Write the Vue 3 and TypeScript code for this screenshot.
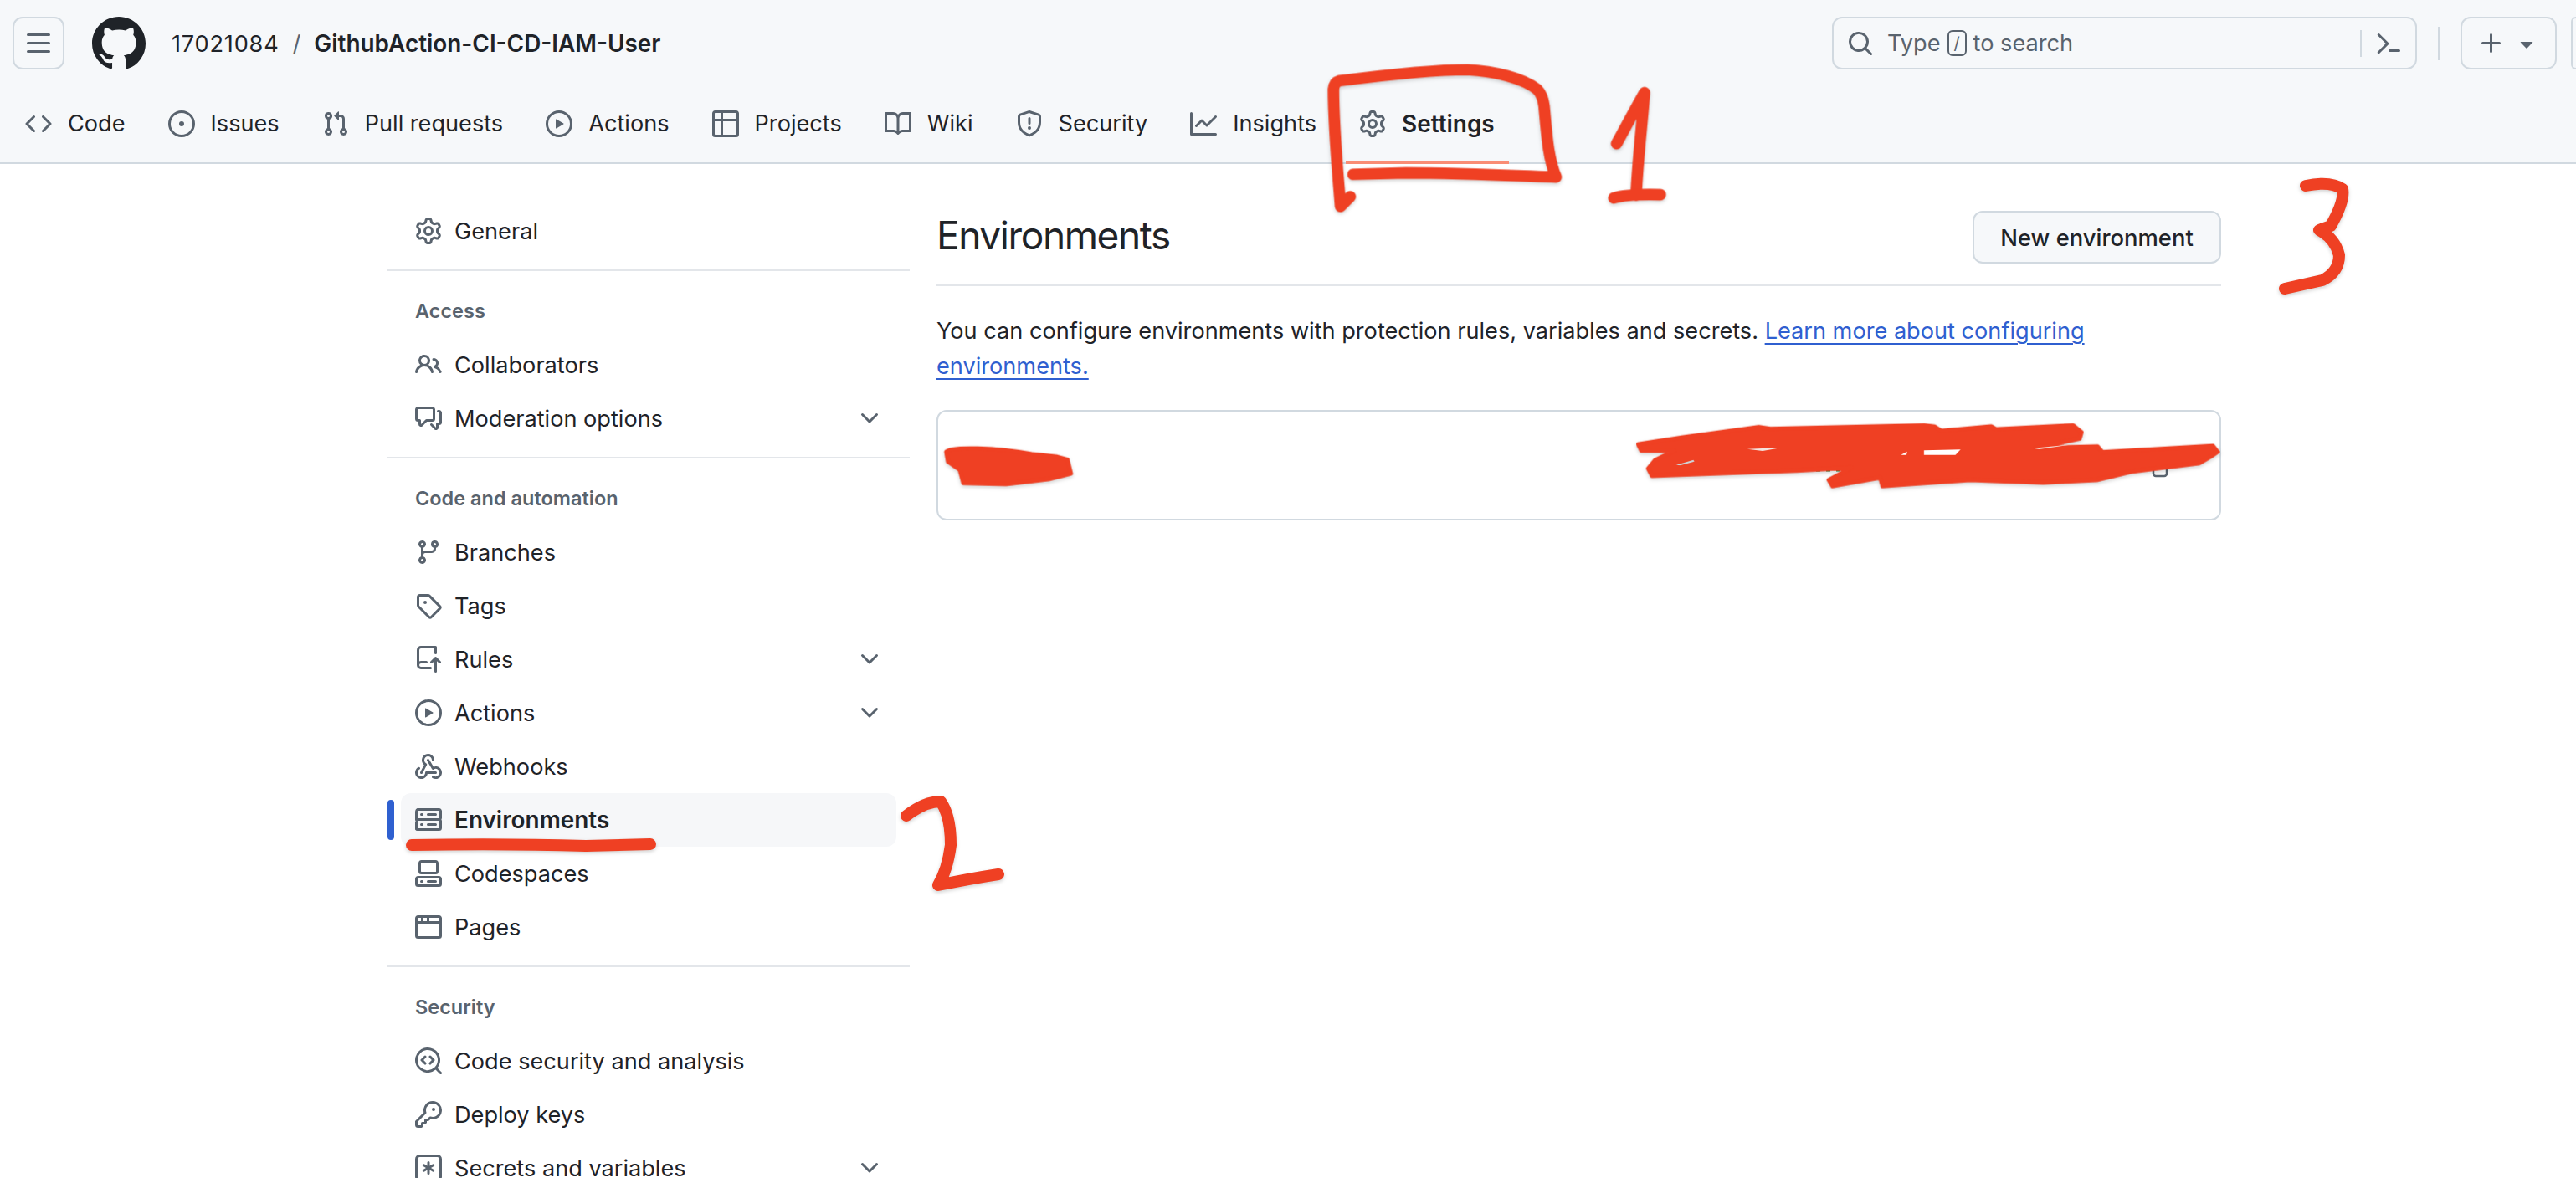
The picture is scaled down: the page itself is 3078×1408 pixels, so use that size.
<script setup lang="ts">
const P: Record<string, string> = {
  bars: 'M1 2.75A.75.75 0 0 1 1.75 2h12.5a.75.75 0 0 1 0 1.5H1.75A.75.75 0 0 1 1 2.75Zm0 5A.75.75 0 0 1 1.75 7h12.5a.75.75 0 0 1 0 1.5H1.75A.75.75 0 0 1 1 7.75ZM1.75 12h12.5a.75.75 0 0 1 0 1.5H1.75a.75.75 0 0 1 0-1.5Z',
  mark: 'M8 0c4.42 0 8 3.58 8 8a8.013 8.013 0 0 1-5.45 7.59c-.4.08-.55-.17-.55-.38 0-.27.01-1.13.01-2.2 0-.75-.25-1.23-.54-1.48 1.78-.2 3.65-.88 3.65-3.95 0-.88-.31-1.59-.82-2.15.08-.2.36-1.02-.08-2.12 0 0-.67-.22-2.2.82-.64-.18-1.32-.27-2-.27-.68 0-1.36.09-2 .27-1.53-1.03-2.2-.82-2.2-.82-.44 1.1-.16 1.92-.08 2.12-.51.56-.82 1.28-.82 2.15 0 3.06 1.86 3.75 3.64 3.95-.23.2-.44.55-.51 1.07-.46.21-1.61.55-2.33-.66-.15-.24-.6-.83-1.23-.82-.67.01-.27.38.01.53.34.19.73.9.82 1.13.16.45.68 1.31 2.69.94 0 .67.01 1.3.01 1.49 0 .21-.15.45-.55.38A7.995 7.995 0 0 1 0 8c0-4.42 3.58-8 8-8Z',
  code: 'm11.28 3.22 4.25 4.25a.75.75 0 0 1 0 1.06l-4.25 4.25a.749.749 0 0 1-1.275-.326.749.749 0 0 1 .215-.734L13.94 8l-3.72-3.72a.749.749 0 0 1 .326-1.275.749.749 0 0 1 .734.215Zm-6.56 0a.751.751 0 0 1 1.042.018.751.751 0 0 1 .018 1.042L2.06 8l3.72 3.72a.749.749 0 0 1-.326 1.275.749.749 0 0 1-.734-.215L.47 8.53a.75.75 0 0 1 0-1.06Z',
  issue: 'M8 9.5a1.5 1.5 0 1 0 0-3 1.5 1.5 0 0 0 0 3Z M8 0a8 8 0 1 1 0 16A8 8 0 0 1 8 0ZM1.5 8a6.5 6.5 0 1 0 13 0 6.5 6.5 0 0 0-13 0Z',
  pull: 'M1.5 3.25a2.25 2.25 0 1 1 3 2.122v5.256a2.251 2.251 0 1 1-1.5 0V5.372A2.25 2.25 0 0 1 1.5 3.25Zm5.677-.177L9.573.677A.25.25 0 0 1 10 .854V2.5h1A2.5 2.5 0 0 1 13.5 5v5.628a2.251 2.251 0 1 1-1.5 0V5a1 1 0 0 0-1-1h-1v1.646a.25.25 0 0 1-.427.177L7.177 3.427a.25.25 0 0 1 0-.354ZM3.75 2.5a.75.75 0 1 0 0 1.5.75.75 0 0 0 0-1.5Zm0 9.5a.75.75 0 1 0 0 1.5.75.75 0 0 0 0-1.5Zm8.25.75a.75.75 0 1 0 1.5 0 .75.75 0 0 0-1.5 0Z',
  play: 'M8 0a8 8 0 1 1 0 16A8 8 0 0 1 8 0ZM1.5 8a6.5 6.5 0 1 0 13 0 6.5 6.5 0 0 0-13 0Zm4.879-2.773 4.264 2.559a.25.25 0 0 1 0 .428l-4.264 2.559A.25.25 0 0 1 6 10.559V5.442a.25.25 0 0 1 .379-.215Z',
  table: 'M0 1.75C0 .784.784 0 1.75 0h12.5C15.216 0 16 .784 16 1.75v12.5A1.75 1.75 0 0 1 14.25 16H1.75A1.75 1.75 0 0 1 0 14.25ZM6.5 6.5v8h7.75a.25.25 0 0 0 .25-.25V6.5Zm8-1.5V1.75a.25.25 0 0 0-.25-.25H6.5V5Zm-13 1.5v7.75c0 .138.112.25.25.25H5v-8ZM5 5V1.5H1.75a.25.25 0 0 0-.25.25V5Z',
  book: 'M0 1.75A.75.75 0 0 1 .75 1h4.253c1.227 0 2.317.59 3 1.501A3.743 3.743 0 0 1 11.006 1h4.245a.75.75 0 0 1 .75.75v10.5a.75.75 0 0 1-.75.75h-4.507a2.25 2.25 0 0 0-1.591.659l-.622.621a.75.75 0 0 1-1.06 0l-.622-.621A2.25 2.25 0 0 0 5.258 13H.75a.75.75 0 0 1-.75-.75Zm7.251 10.324.004-5.073-.002-2.253A2.25 2.25 0 0 0 5.003 2.5H1.5v9h3.757a3.75 3.75 0 0 1 1.994.574ZM8.755 4.75l-.004 7.322a3.752 3.752 0 0 1 1.992-.572H14.5v-9h-3.495a2.25 2.25 0 0 0-2.25 2.25Z',
  shield: 'M7.467.133a1.748 1.748 0 0 1 1.066 0l5.25 1.68A1.75 1.75 0 0 1 15 3.48V7c0 1.566-.32 3.182-1.303 4.682-.983 1.498-2.585 2.813-5.032 3.855a1.697 1.697 0 0 1-1.33 0c-2.447-1.042-4.049-2.357-5.032-3.855C1.32 10.182 1 8.566 1 7V3.48a1.75 1.75 0 0 1 1.217-1.667Zm.61 1.429a.25.25 0 0 0-.153 0l-5.25 1.68a.25.25 0 0 0-.174.238V7c0 1.358.275 2.666 1.057 3.86.784 1.194 2.121 2.34 4.366 3.297a.196.196 0 0 0 .154 0c2.245-.956 3.582-2.104 4.366-3.298C13.225 9.666 13.5 8.36 13.5 7V3.48a.251.251 0 0 0-.174-.237l-5.25-1.68ZM8.75 4.75v3a.75.75 0 0 1-1.5 0v-3a.75.75 0 0 1 1.5 0ZM9 10.5a1 1 0 1 1-2 0 1 1 0 0 1 2 0Z',
  graph: 'M1.5 1.75V13.5h13.75a.75.75 0 0 1 0 1.5H.75a.75.75 0 0 1-.75-.75V1.75a.75.75 0 0 1 1.5 0Zm14.28 2.53-5.25 5.25a.75.75 0 0 1-1.06 0L7 7.06 4.28 9.78a.751.751 0 0 1-1.042-.018.751.751 0 0 1-.018-1.042l3.25-3.25a.75.75 0 0 1 1.06 0L10 7.94l4.72-4.72a.751.751 0 0 1 1.042.018.751.751 0 0 1 .018 1.042Z',
  gear: 'M8 0a8.2 8.2 0 0 1 .701.031C9.444.095 9.99.645 10.16 1.29l.288 1.107c.018.066.079.158.212.224.231.114.454.243.668.386.123.082.233.09.299.071l1.103-.303c.644-.176 1.392.021 1.82.63.27.385.506.792.704 1.218.315.675.111 1.422-.364 1.891l-.814.806c-.049.048-.098.147-.088.294.016.257.016.515 0 .772-.01.147.038.246.088.294l.814.806c.475.469.679 1.216.364 1.891a7.977 7.977 0 0 1-.704 1.217c-.428.61-1.176.807-1.82.63l-1.102-.302c-.067-.019-.177-.011-.3.071a5.909 5.909 0 0 1-.668.386c-.133.066-.194.158-.211.224l-.29 1.106c-.168.646-.715 1.196-1.458 1.26a8.006 8.006 0 0 1-1.402 0c-.743-.064-1.289-.614-1.458-1.26l-.289-1.106c-.018-.066-.079-.158-.212-.224a5.738 5.738 0 0 1-.668-.386c-.123-.082-.233-.09-.299-.071l-1.103.303c-.644.176-1.392-.021-1.82-.63a8.12 8.12 0 0 1-.704-1.218c-.315-.675-.111-1.422.363-1.891l.815-.806c.05-.048.098-.147.088-.294a6.214 6.214 0 0 1 0-.772c.01-.147-.038-.246-.088-.294l-.815-.806C.635 6.045.431 5.298.746 4.623a7.92 7.92 0 0 1 .704-1.217c.428-.61 1.176-.807 1.82-.63l1.102.302c.067.019.177.011.3-.071.214-.143.437-.272.668-.386.133-.066.194-.158.211-.224l.29-1.106C6.009.645 6.556.095 7.299.03 7.53.01 7.764 0 8 0Zm-.571 1.525c-.036.003-.108.036-.137.146l-.289 1.105c-.147.561-.549.967-.998 1.189-.173.086-.34.183-.5.29-.417.278-.97.423-1.529.27l-1.103-.303c-.109-.03-.175.016-.195.045-.22.312-.412.644-.573.99-.014.031-.021.11.059.19l.815.806c.411.406.562.957.53 1.456a4.709 4.709 0 0 0 0 .582c.032.499-.119 1.05-.53 1.456l-.815.806c-.081.08-.073.159-.059.19.162.346.353.677.573.989.02.03.085.076.195.046l1.102-.303c.56-.153 1.113-.008 1.53.27.161.107.328.204.501.29.447.222.85.629.997 1.189l.289 1.105c.029.109.101.143.137.146a6.6 6.6 0 0 0 1.142 0c.036-.003.108-.036.137-.146l.289-1.105c.147-.561.549-.967.998-1.189.173-.086.34-.183.5-.29.417-.278.97-.423 1.529-.27l1.103.303c.109.029.175-.016.195-.045.22-.313.411-.644.573-.99.014-.031.021-.11-.059-.19l-.815-.806c-.411-.406-.562-.957-.53-1.456a4.709 4.709 0 0 0 0-.582c-.032-.499.119-1.05.53-1.456l.815-.806c.081-.08.073-.159.059-.19a6.464 6.464 0 0 0-.573-.989c-.02-.03-.085-.076-.195-.046l-1.102.303c-.56.153-1.113.008-1.53-.27a4.44 4.44 0 0 0-.501-.29c-.447-.222-.85-.629-.997-1.189l-.289-1.105c-.029-.11-.101-.143-.137-.146a6.6 6.6 0 0 0-1.142 0ZM11 8a3 3 0 1 1-6 0 3 3 0 0 1 6 0ZM9.5 8a1.5 1.5 0 1 0-3.001.001A1.5 1.5 0 0 0 9.5 8Z',
  search: 'M10.68 11.74a6 6 0 0 1-7.922-8.982 6 6 0 0 1 8.982 7.922l3.04 3.04a.749.749 0 0 1-.326 1.275.749.749 0 0 1-.734-.215ZM11.5 7a4.499 4.499 0 1 0-8.997 0A4.499 4.499 0 0 0 11.5 7Z',
  palette: 'm6.354 8.04-4.773 4.773a.75.75 0 1 0 1.061 1.06L7.945 8.57a.75.75 0 0 0 0-1.06L2.642 2.206a.75.75 0 0 0-1.06 1.061L6.353 8.04ZM8.75 11.5a.75.75 0 0 0 0 1.5h5.5a.75.75 0 0 0 0-1.5h-5.5Z',
  plus: 'M7.75 2a.75.75 0 0 1 .75.75V7h4.25a.75.75 0 0 1 0 1.5H8.5v4.25a.75.75 0 0 1-1.5 0V8.5H2.75a.75.75 0 0 1 0-1.5H7V2.75A.75.75 0 0 1 7.75 2Z',
  tri: 'm4.427 7.427 3.396 3.396a.25.25 0 0 0 .354 0l3.396-3.396A.25.25 0 0 0 11.396 7H4.604a.25.25 0 0 0-.177.427Z',
  chev: 'M12.78 5.22a.749.749 0 0 1 0 1.06l-4.25 4.25a.749.749 0 0 1-1.06 0L3.22 6.28a.749.749 0 1 1 1.06-1.06L8 8.939l3.72-3.719a.749.749 0 0 1 1.06 0Z',
  people: 'M2 5.5a3.5 3.5 0 1 1 5.898 2.549 5.508 5.508 0 0 1 3.034 4.084.75.75 0 1 1-1.482.235 4 4 0 0 0-7.9 0 .75.75 0 0 1-1.482-.236A5.507 5.507 0 0 1 3.102 8.05 3.493 3.493 0 0 1 2 5.5ZM11 4a3.001 3.001 0 0 1 2.22 5.018 5.01 5.01 0 0 1 2.56 3.012.749.749 0 0 1-.885.954.752.752 0 0 1-.549-.514 3.507 3.507 0 0 0-2.522-2.372.75.75 0 0 1-.574-.73v-.352a.75.75 0 0 1 .416-.672A1.5 1.5 0 0 0 11 5.5.75.75 0 0 1 11 4Zm-5.5-.5a2 2 0 1 0-.001 3.999A2 2 0 0 0 5.5 3.5Z',
  discussion: 'M1.75 1h8.5c.966 0 1.75.784 1.75 1.75v5.5A1.75 1.75 0 0 1 10.25 10H7.061l-2.574 2.573A1.458 1.458 0 0 1 2 11.543V10h-.25A1.75 1.75 0 0 1 0 8.25v-5.5C0 1.784.784 1 1.75 1ZM1.5 2.75v5.5c0 .138.112.25.25.25h1a.75.75 0 0 1 .75.75v2.19l2.72-2.72a.749.749 0 0 1 .53-.22h3.5a.25.25 0 0 0 .25-.25v-5.5a.25.25 0 0 0-.25-.25h-8.5a.25.25 0 0 0-.25.25Zm13 2a.25.25 0 0 0-.25-.25h-.5a.75.75 0 0 1 0-1.5h.5c.966 0 1.75.784 1.75 1.75v5.5A1.75 1.75 0 0 1 14.25 12H14v1.543a1.458 1.458 0 0 1-2.487 1.03L9.22 12.28a.749.749 0 0 1 .326-1.275.749.749 0 0 1 .734.215l2.22 2.22v-2.19a.75.75 0 0 1 .75-.75h1a.25.25 0 0 0 .25-.25Z',
  branch: 'M9.5 3.25a2.25 2.25 0 1 1 3 2.122V6A2.5 2.5 0 0 1 10 8.5H6a1 1 0 0 0-1 1v1.128a2.251 2.251 0 1 1-1.5 0V5.372a2.25 2.25 0 1 1 1.5 0v1.836A2.493 2.493 0 0 1 6 7h4a1 1 0 0 0 1-1v-.628A2.25 2.25 0 0 1 9.5 3.25Zm-6 0a.75.75 0 1 0 1.5 0 .75.75 0 0 0-1.5 0Zm8.25-.75a.75.75 0 1 0 0 1.5.75.75 0 0 0 0-1.5ZM4.25 12a.75.75 0 1 0 0 1.5.75.75 0 0 0 0-1.5Z',
  tag: 'M1 7.775V2.75C1 1.784 1.784 1 2.75 1h5.025c.464 0 .91.184 1.238.513l6.25 6.25a1.75 1.75 0 0 1 0 2.474l-5.026 5.026a1.75 1.75 0 0 1-2.474 0l-6.25-6.25A1.75 1.75 0 0 1 1 7.775Zm1.5 0c0 .066.026.13.073.177l6.25 6.25a.25.25 0 0 0 .354 0l5.025-5.025a.25.25 0 0 0 0-.354l-6.25-6.25a.25.25 0 0 0-.177-.073H2.75a.25.25 0 0 0-.25.25ZM6 5a1 1 0 1 1 0 2 1 1 0 0 1 0-2Z',
  push: 'M1 2.5A2.5 2.5 0 0 1 3.5 0h8.75a.75.75 0 0 1 .75.75v3.5a.75.75 0 0 1-1.5 0V1.5h-8a1 1 0 0 0-1 1v6.708A2.492 2.492 0 0 1 3.5 9h3.25a.75.75 0 0 1 0 1.5H3.5a1 1 0 0 0 0 2h5.75a.75.75 0 0 1 0 1.5H3.5A2.5 2.5 0 0 1 1 11.5Zm13.23 7.79h-.001l-1.224-1.224v6.184a.75.75 0 0 1-1.5 0V9.066L10.28 10.29a.75.75 0 0 1-1.06-1.061l2.505-2.504a.75.75 0 0 1 1.06 0L15.29 9.23a.751.751 0 0 1-.018 1.042.751.751 0 0 1-1.042.018Z',
  webhook: 'M5.5 4.25a2.25 2.25 0 0 1 4.5 0 .75.75 0 0 0 1.5 0 3.75 3.75 0 1 0-6.14 2.889l-2.272 4.258a.75.75 0 0 0 1.324.706L7 7.25a.75.75 0 0 0-.309-1.015A2.25 2.25 0 0 1 5.5 4.25Z M7.364 3.607a.75.75 0 0 1 1.03.257l2.608 4.349a3.75 3.75 0 1 1-.628 6.785.75.75 0 0 1 .752-1.299 2.25 2.25 0 1 0-.033-3.88.75.75 0 0 1-1.03-.256L7.107 4.636a.75.75 0 0 1 .257-1.03Z M2.9 8.776A.75.75 0 0 1 2.625 9.8 2.25 2.25 0 1 0 6 11.75a.75.75 0 0 1 .75-.751h5.5a.75.75 0 0 1 0 1.5H7.425a3.751 3.751 0 1 1-5.55-3.998.75.75 0 0 1 1.024.274Z',
  server: 'M1.75 1h12.5c.966 0 1.75.784 1.75 1.75v4c0 .372-.116.717-.314 1 .198.283.314.628.314 1v4a1.75 1.75 0 0 1-1.75 1.75H1.75A1.75 1.75 0 0 1 0 13.75v-4c0-.372.116-.717.314-1a1.739 1.739 0 0 1-.314-1v-4C0 1.784.784 1 1.75 1ZM1.5 2.75v4c0 .138.112.25.25.25h12.5a.25.25 0 0 0 .25-.25v-4a.25.25 0 0 0-.25-.25H1.75a.25.25 0 0 0-.25.25Zm.25 5.75a.25.25 0 0 0-.25.25v4c0 .138.112.25.25.25h12.5a.25.25 0 0 0 .25-.25v-4a.25.25 0 0 0-.25-.25ZM7 4.75A.75.75 0 0 1 7.75 4h4.5a.75.75 0 0 1 0 1.5h-4.5A.75.75 0 0 1 7 4.75ZM7.75 10h4.5a.75.75 0 0 1 0 1.5h-4.5a.75.75 0 0 1 0-1.5ZM3 4.75A.75.75 0 0 1 3.75 4h.5a.75.75 0 0 1 0 1.5h-.5A.75.75 0 0 1 3 4.75ZM3.75 10h.5a.75.75 0 0 1 0 1.5h-.5a.75.75 0 0 1 0-1.5Z',
  codespaces: 'M0 11.25c0-.966.784-1.75 1.75-1.75h12.5c.966 0 1.75.784 1.75 1.75v3A1.75 1.75 0 0 1 14.25 16H1.75A1.75 1.75 0 0 1 0 14.25Zm2-9.5C2 .784 2.784 0 3.75 0h8.5C13.216 0 14 .784 14 1.75v5a1.75 1.75 0 0 1-1.75 1.75h-8.5A1.75 1.75 0 0 1 2 6.75Zm1.75-.25a.25.25 0 0 0-.25.25v5c0 .138.112.25.25.25h8.5a.25.25 0 0 0 .25-.25v-5a.25.25 0 0 0-.25-.25Zm-2 9.5a.25.25 0 0 0-.25.25v3c0 .138.112.25.25.25h12.5a.25.25 0 0 0 .25-.25v-3a.25.25 0 0 0-.25-.25Z M7 12.75a.75.75 0 0 1 .75-.75h4.5a.75.75 0 0 1 0 1.5h-4.5a.75.75 0 0 1-.75-.75Zm-4 0a.75.75 0 0 1 .75-.75h.5a.75.75 0 0 1 0 1.5h-.5a.75.75 0 0 1-.75-.75Z',
  browser: 'M0 2.75C0 1.784.784 1 1.75 1h12.5c.966 0 1.75.784 1.75 1.75v10.5A1.75 1.75 0 0 1 14.25 15H1.75A1.75 1.75 0 0 1 0 13.25ZM14.5 6h-13v7.25c0 .138.112.25.25.25h12.5a.25.25 0 0 0 .25-.25Zm-6-3.5v2H14.5V2.75a.25.25 0 0 0-.25-.25ZM5 2.5v2h2v-2Zm-3.25 0a.25.25 0 0 0-.25.25V4.5h2v-2Z',
  codescan: 'M8.47 4.97a.75.75 0 0 0 0 1.06L9.94 7.5 8.47 8.97a.75.75 0 1 0 1.06 1.06l2-2a.75.75 0 0 0 0-1.06l-2-2a.75.75 0 0 0-1.06 0ZM6.53 6.03a.75.75 0 0 0-1.06-1.06l-2 2a.75.75 0 0 0 0 1.06l2 2a.75.75 0 1 0 1.06-1.06L5.06 7.5l1.47-1.47Z M12.246 13.307a7.501 7.501 0 1 1 1.06-1.06l2.474 2.473a.749.749 0 0 1-.326 1.275.749.749 0 0 1-.734-.215ZM1.5 7.5a6.002 6.002 0 0 0 3.608 5.504 6.002 6.002 0 0 0 6.486-1.117.748.748 0 0 1 .292-.293A6 6 0 1 0 1.5 7.5Z',
  key: 'M10.5 0a5.499 5.499 0 1 1-1.288 10.848l-.932.932a.749.749 0 0 1-.53.22H7v.75a.749.749 0 0 1-.22.53l-.5.5a.749.749 0 0 1-.53.22H5v.75a.749.749 0 0 1-.22.53l-.5.5a.749.749 0 0 1-.53.22h-2A1.75 1.75 0 0 1 0 14.25v-2c0-.199.079-.389.22-.53l4.932-4.932A5.5 5.5 0 0 1 10.5 0Zm-4 5.5c-.001.431.069.86.205 1.269a.75.75 0 0 1-.181.768L1.5 12.56v1.69c0 .138.112.25.25.25h1.69l.06-.06v-1.19a.75.75 0 0 1 .75-.75h1.19l.06-.06v-1.19a.75.75 0 0 1 .75-.75h1.19l1.023-1.025a.75.75 0 0 1 .768-.18A4 4 0 1 0 6.5 5.5ZM11 6a1 1 0 1 1 0-2 1 1 0 0 1 0 2Z',
  asterisk: 'M0 2.75A2.75 2.75 0 0 1 2.75 0h10.5A2.75 2.75 0 0 1 16 2.75v10.5A2.75 2.75 0 0 1 13.25 16H2.75A2.75 2.75 0 0 1 0 13.25ZM2.75 1.5c-.69 0-1.25.56-1.25 1.25v10.5c0 .69.56 1.25 1.25 1.25h10.5c.69 0 1.25-.56 1.25-1.25V2.75c0-.69-.56-1.25-1.25-1.25Z M8 4a.75.75 0 0 1 .75.75V6.7l1.69-.975a.75.75 0 0 1 .75 1.3L9.5 8l1.69.976a.75.75 0 0 1-.75 1.298L8.75 9.3v1.951a.75.75 0 0 1-1.5 0V9.299l-1.69.976a.75.75 0 0 1-.75-1.3L6.5 8l-1.69-.975a.75.75 0 0 1 .75-1.3l1.69.976V4.75A.75.75 0 0 1 8 4Z',
}

const tabs = [
  { label: 'Code', icon: 'code' },
  { label: 'Issues', icon: 'issue' },
  { label: 'Pull requests', icon: 'pull' },
  { label: 'Actions', icon: 'play' },
  { label: 'Projects', icon: 'table' },
  { label: 'Wiki', icon: 'book' },
  { label: 'Security', icon: 'shield' },
  { label: 'Insights', icon: 'graph' },
  { label: 'Settings', icon: 'gear', active: true },
]

interface Item { label: string; icon: string; chev?: boolean; active?: boolean }
interface Group { title?: string; items: Item[] }
const groups: Group[] = [
  { items: [{ label: 'General', icon: 'gear' }] },
  { title: 'Access', items: [
    { label: 'Collaborators', icon: 'people' },
    { label: 'Moderation options', icon: 'discussion', chev: true },
  ] },
  { title: 'Code and automation', items: [
    { label: 'Branches', icon: 'branch' },
    { label: 'Tags', icon: 'tag' },
    { label: 'Rules', icon: 'push', chev: true },
    { label: 'Actions', icon: 'play', chev: true },
    { label: 'Webhooks', icon: 'webhook' },
    { label: 'Environments', icon: 'server', active: true },
    { label: 'Codespaces', icon: 'codespaces' },
    { label: 'Pages', icon: 'browser' },
  ] },
  { title: 'Security', items: [
    { label: 'Code security and analysis', icon: 'codescan' },
    { label: 'Deploy keys', icon: 'key' },
    { label: 'Secrets and variables', icon: 'asterisk', chev: true },
  ] },
]
</script>

<template>
  <div class="page">
    <header class="header">
      <div class="top">
        <button class="btn-icon burger"><svg class="ic" viewBox="0 0 16 16"><path :d="P.bars" /></svg></button>
        <svg class="logo" viewBox="0 0 16 16"><path :d="P.mark" /></svg>
        <div class="crumb">
          <span class="owner">17021084</span>
          <span class="slash">/</span>
          <strong>GithubAction-CI-CD-IAM-User</strong>
        </div>
        <div class="spacer"></div>
        <div class="search">
          <svg class="ic" viewBox="0 0 16 16"><path :d="P.search" /></svg>
          <span class="placeholder">Type <kbd class="kbd">/</kbd> to search</span>
          <span class="search-sep"></span>
          <svg class="ic" viewBox="0 0 16 16"><path :d="P.palette" /></svg>
        </div>
        <span class="top-sep"></span>
        <button class="btn-icon plus">
          <svg class="ic" viewBox="0 0 16 16"><path :d="P.plus" /></svg>
          <svg class="ic" viewBox="0 0 16 16"><path :d="P.tri" /></svg>
        </button>
        <button class="btn-icon stub"></button>
      </div>
      <nav class="tabs">
        <a v-for="t in tabs" :key="t.label" class="tab" :class="{ active: t.active }">
          <svg class="ic" viewBox="0 0 16 16"><path :d="P[t.icon]" /></svg>
          <span>{{ t.label }}</span>
        </a>
      </nav>
    </header>

    <main class="main">
      <aside class="side">
        <section v-for="(g, i) in groups" :key="i" class="group">
          <h3 v-if="g.title" class="group-title">{{ g.title }}</h3>
          <a v-for="it in g.items" :key="it.label" class="item" :class="{ active: it.active }">
            <svg class="ic" viewBox="0 0 16 16"><path :d="P[it.icon]" /></svg>
            <span class="item-label">{{ it.label }}</span>
            <svg v-if="it.chev" class="ic chev" viewBox="0 0 16 16"><path :d="P.chev" /></svg>
          </a>
        </section>
      </aside>

      <section class="content">
        <div class="head">
          <h2 class="title">Environments</h2>
          <button class="new">New environment</button>
        </div>
        <p class="desc">You can configure environments with protection rules, variables and secrets. <a class="link">Learn more about configuring environments.</a></p>
        <div class="box"></div>
      </section>
    </main>

    <svg class="marks" viewBox="0 0 3078 1408">
      <rect x="2573" y="552" width="16" height="17" rx="3" fill="none" stroke="#59636e" stroke-width="2.5" />
      <line x1="2170" y1="561" x2="2208" y2="561" stroke="#2f7d32" stroke-width="5" stroke-dasharray="5 7" />
      <g fill="none" stroke="#ef4023" stroke-linecap="round" stroke-linejoin="round">
        <g transform="translate(1580 70) scale(.3333)" stroke-width="41">
          <path d="M100 495 L65 530 C55 400 40 250 40 110 Q42 85 60 80 C200 62 400 40 520 40 C620 45 720 70 770 110 Q790 130 795 170 C805 280 810 360 838 425 C700 420 500 410 300 410 L110 415" />
          <path d="M1055 305 C1090 240 1125 175 1155 122 C1145 250 1130 370 1125 490" />
          <path d="M1045 500 Q1090 485 1212 488" />
        </g>
        <g stroke-width="14">
          <path d="M2755 222 Q2785 216 2799 226 Q2802 240 2785 270 L2771 275 Q2790 285 2795 305 Q2795 325 2775 335 L2730 345" />
          <path d="M1083 975 Q1105 958 1124 958 Q1136 975 1136 1010 Q1132 1040 1121 1058 Q1160 1050 1193 1045" />
          <path d="M492 1010 Q600 1008 700 1011 L777 1009" />
        </g>
      </g>
      <g class="blobs" fill="#ef4023" stroke="#ef4023" stroke-linejoin="round">
        <g transform="translate(1100 360) scale(1.0204 .3333)">
          <path vector-effect="non-scaling-stroke" stroke-width="5" d="M30 540 C35 520 90 525 130 548 L160 558 L172 568 L176 618 L150 638 L100 656 L50 652 L46 605 L32 575 Z" />
        </g>
        <g transform="translate(1950 495) scale(.4591 .3333)">
          <path vector-effect="non-scaling-stroke" stroke-width="5" d="M16 108 L130 84 L330 46 L360 52 L760 40 L788 45 L805 60 L935 44 L948 54 L1148 40 L1170 65 L1165 88 L1050 122 L1212 116 L1224 136 L1512 114 L1524 135 L1505 153 L1476 176 L1300 206 L1210 236 L1070 246 L880 236 L652 258 L646 228 L522 258 L512 236 L572 192 L430 202 L52 221 L42 195 L60 165 L110 132 L24 131 Z" />
        </g>
      </g>
      <g fill="#fff" transform="translate(1950 495) scale(.4591 .3333)">
        <path fill="#cfd3d6" d="M115 182 L160 164 L162 170 L125 184 Z" />
        <path fill="#f4e4e0" d="M300 125 L390 120 L340 132 Z" />
        <path d="M700 146 L716 134 L714 146 Z" />
        <path d="M760 130 L855 127 L842 146 L760 146 Z" />
        <path fill="#f5d6cf" d="M1045 122 L1150 108 L1060 126 Z" />
      </g>
    </svg>
  </div>
</template>

<style>
html, body { margin: 0; background: #fff; }
</style>

<style scoped>
.page {
  position: relative;
  width: 3078px;
  height: 1408px;
  overflow: hidden;
  background: #fff;
  color: #1f2328;
  font-family: Inter, "Liberation Sans", sans-serif;
  font-size: 27.15px;
}
.ic { width: 32px; height: 32px; fill: #59636e; flex: none; display: block; }
.header {
  height: 194px;
  background: #f6f8fa;
  border-bottom: 2px solid #d1d9e0;
  display: flex;
  flex-direction: column;
}
.top {
  display: flex;
  align-items: center;
  padding: 20px 0 0 15px;
  height: 63px;
}
.btn-icon {
  height: 63px;
  box-sizing: border-box;
  background: #f6f8fa;
  border: 2px solid #d1d9e0;
  border-radius: 12px;
  padding: 0;
  display: flex;
  align-items: center;
  justify-content: center;
}
.burger { width: 62px; }
.logo { width: 64px; height: 64px; fill: #1f2328; margin-left: 33px; flex: none; }
.crumb { margin-left: 31px; display: flex; align-items: center; gap: 16px; padding-top: 1px; }
.owner { letter-spacing: .8px; }
.crumb strong { font-weight: 600; font-size: 27.9px; }
.slash { color: #59636e; }
.spacer { flex: 1; }
.search {
  width: 699px;
  height: 63px;
  box-sizing: border-box;
  border: 2px solid #d1d9e0;
  border-radius: 12px;
  display: flex;
  align-items: center;
  padding: 0 16px;
  color: #59636e;
}
.placeholder { margin-left: 16px; flex: 1; display: flex; align-items: center; gap: 8px; }
.kbd {
  width: 23px;
  height: 31px;
  box-sizing: border-box;
  border: 2px solid #59636e;
  border-radius: 6px;
  font: inherit;
  font-size: 20px;
  display: inline-flex;
  align-items: center;
  justify-content: center;
}
.search-sep { width: 2px; height: 32px; background: #d1d9e0; margin-right: 16px; }
.top-sep { width: 2px; height: 40px; background: #d1d9e0; margin: 0 25px; }
.plus { width: 115px; gap: 10px; }
.stub { width: 6px; margin-left: 17px; border-right: 0; border-radius: 12px 0 0 12px; }
.tabs {
  flex: 1;
  display: flex;
  align-items: stretch;
  gap: 51px;
  margin-top: 17px;
  padding: 1px 0 0 30px;
}
.tab { position: relative; display: flex; align-items: center; gap: 19px; }
.tab.active { font-weight: 600; font-size: 27.9px; }
.tab.active::after {
  content: "";
  position: absolute;
  left: -16px;
  right: -17px;
  bottom: -2px;
  height: 4px;
  background: #f98d75;
}
.main { display: flex; gap: 32px; padding-left: 463px; }
.side { width: 624px; flex: none; padding-top: 48px; }
.group + .group { border-top: 2px solid #e3e6ea; margin-top: 14px; }
.group-title {
  margin: 32px 0 16px 33px;
  height: 32px;
  line-height: 32px;
  font-size: 23.5px;
  font-weight: 600;
  color: #59636e;
}
.item {
  position: relative;
  height: 64px;
  margin: 0 16px;
  padding: 0 16px 0 17px;
  display: flex;
  align-items: center;
  gap: 15px;
  border-radius: 12px;
}
.item-label { flex: 1; }
.item.active { background: #f6f7f9; font-weight: 600; font-size: 27.9px; }
.item.active::before {
  content: "";
  position: absolute;
  left: -16px;
  top: 8px;
  bottom: 8px;
  width: 8px;
  border-radius: 4px;
  background: #2f60d0;
}
.content { width: 1535px; flex: none; }
.head {
  margin-top: 56px;
  padding-bottom: 25px;
  border-bottom: 2px solid #e3e6ea;
  display: flex;
  align-items: center;
  justify-content: space-between;
}
.title { margin: 0; font-size: 46px; letter-spacing: -1.4px; font-weight: 400; line-height: 59px; padding-bottom: 4px; }
.new {
  width: 297px;
  height: 63px;
  box-sizing: border-box;
  background: #f6f8fa;
  border: 2px solid #d1d9e0;
  border-radius: 12px;
  font: inherit;
  font-size: 27.4px;
  font-weight: 500;
  color: #1f2328;
  padding: 0;
}
.desc { margin: 33px 0 31px; line-height: 42px; }
.link { color: #2f5fd0; text-decoration: underline; text-underline-offset: 5px; text-decoration-thickness: 2px; }
.box {
  height: 132px;
  box-sizing: border-box;
  border: 2px solid #d1d9e0;
  border-radius: 12px;
}
.marks {
  position: absolute;
  inset: 0;
  width: 3078px;
  height: 1408px;
  pointer-events: none;
}
.marks > g:not(:last-child) { filter: drop-shadow(0 2px 2px rgba(0,0,0,.18)); }
</style>
